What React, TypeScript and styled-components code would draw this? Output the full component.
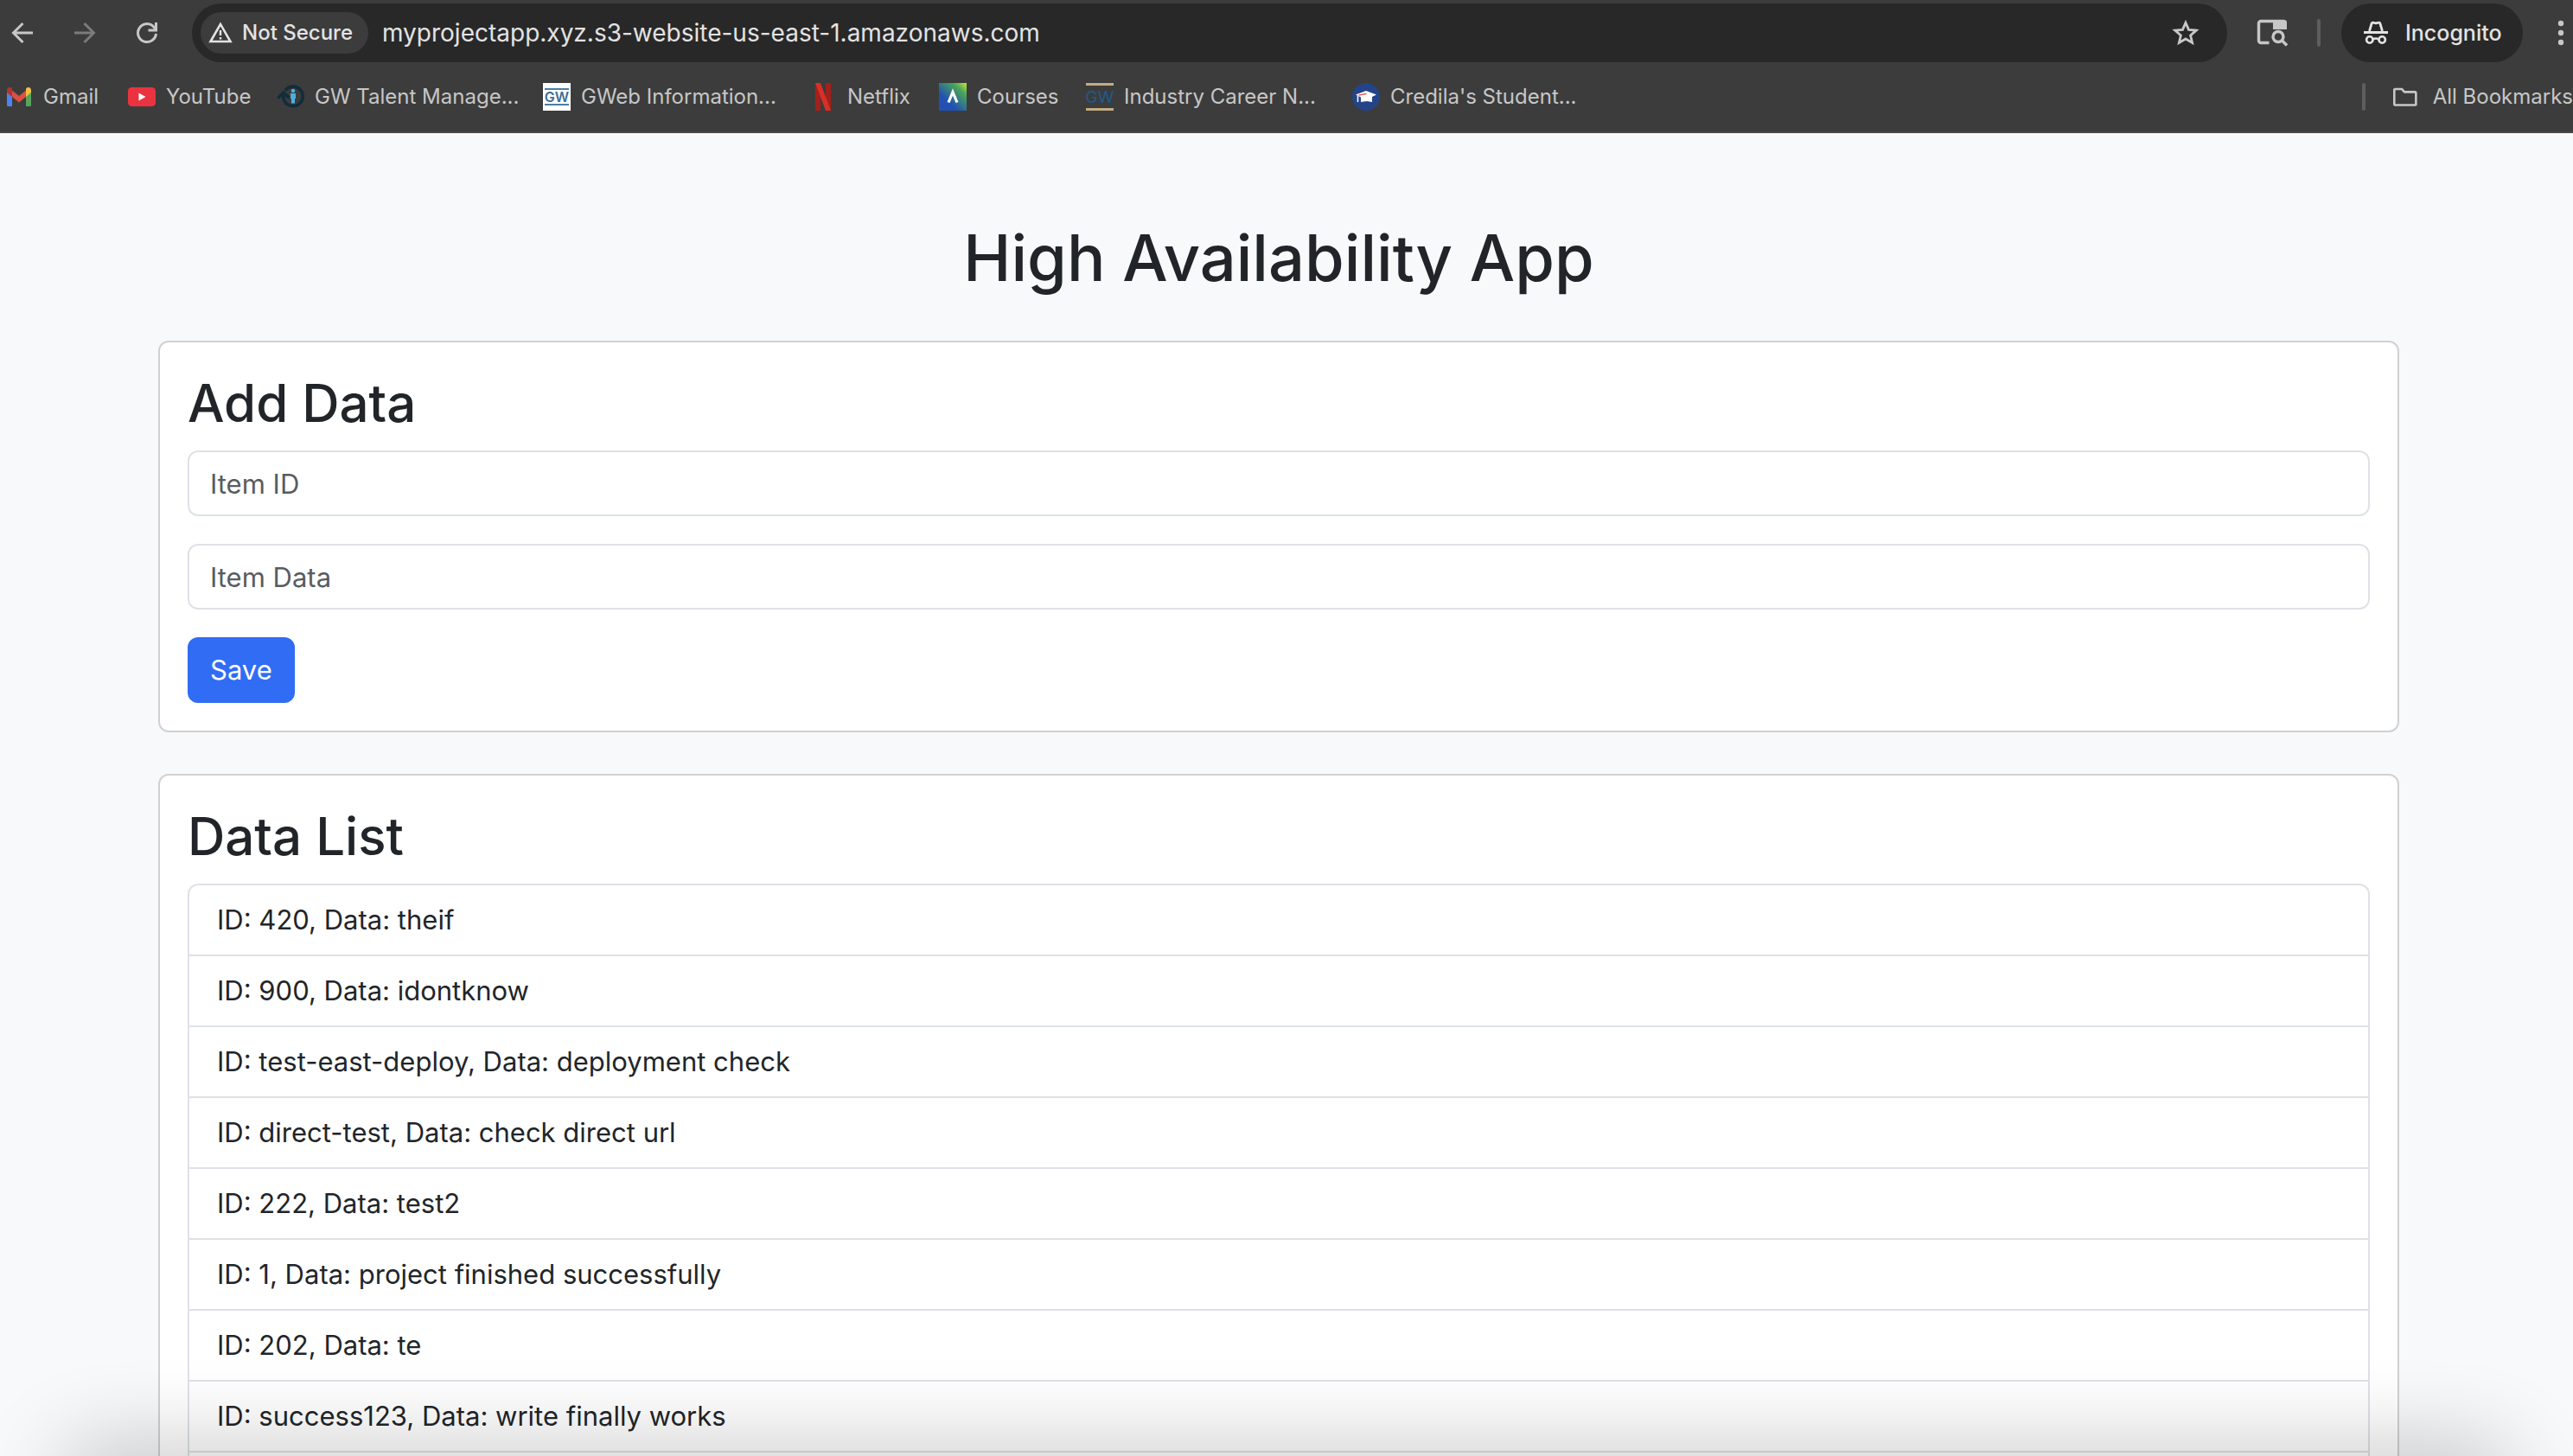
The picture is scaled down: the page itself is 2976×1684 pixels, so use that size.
import React, { useState } from "react";
import styled, { createGlobalStyle } from "styled-components";

const GlobalStyle = createGlobalStyle`
  *, *::before, *::after { box-sizing: border-box; }
  html, body { margin: 0; }
  body {
    background: #f8f9fa;
    color: #212529;
    font-family: Inter, "Liberation Sans", sans-serif;
    font-size: 31px;
    line-height: 48px;
  }
  button, input { font: inherit; }
`;

const Window = styled.div`
  height: 100vh;
  display: flex;
  flex-direction: column;
  overflow: hidden;
  position: relative;
`;

const Chrome = styled.header`
  flex: none;
  display: flex;
  flex-direction: column;
  padding: 4px 0 0;
  background: #3c3c3c;
  border-bottom: 2px solid #484848;
  color: #c7c7c7;
  overflow: hidden;
`;

const Toolbar = styled.div`
  display: flex;
  align-items: center;
  height: 68px;
`;

const NavButtons = styled.nav`
  display: flex;
  gap: 36px;
  padding: 0 34px 0 8px;
`;

const IconButton = styled.button<{ $faded?: boolean; $narrow?: boolean }>`
  display: flex;
  align-items: center;
  justify-content: center;
  flex: none;
  width: ${(p) => (p.$narrow ? 28 : 36)}px;
  height: 36px;
  padding: 0;
  border: 0;
  background: none;
  color: ${(p) => (p.$faded ? "#7b7b7b" : "#c7c7c7")};
`;

const Omnibox = styled.div`
  flex: 1;
  display: flex;
  align-items: center;
  gap: 16px;
  height: 68px;
  padding: 0 30px 0 10px;
  border-radius: 34px;
  background: #282828;
`;

const SecurityChip = styled.button`
  display: flex;
  align-items: center;
  gap: 10px;
  flex: none;
  width: 194px;
  height: 48px;
  padding: 0 8px;
  border: 0;
  border-radius: 24px;
  background: #3c3c3c;
  color: #e3e3e3;
  font-size: 24px;
  font-weight: 500;
  white-space: nowrap;
`;

const Address = styled.input`
  flex: 1;
  min-width: 0;
  padding: 0;
  border: 0;
  outline: 0;
  background: none;
  color: #e3e3e3;
  font-size: 28px;
`;

const ToolbarEnd = styled.div`
  display: flex;
  align-items: center;
  flex: none;
  padding-left: 34px;
`;

const Divider = styled.span`
  flex: none;
  width: 4px;
  height: 32px;
  border-radius: 2px;
  background: #5e5e5e;
`;

const IncognitoButton = styled.button`
  display: flex;
  align-items: center;
  gap: 18px;
  width: 210px;
  height: 68px;
  margin: 0 30px 0 24px;
  padding: 0 24px;
  border: 0;
  border-radius: 34px;
  background: #282828;
  color: #e3e3e3;
  font-size: 25px;
  font-weight: 500;
`;

const ToolbarDivider = styled(Divider)`
  margin-left: 34px;
`;

const BookmarkBar = styled.nav`
  display: flex;
  align-items: center;
  height: 80px;
  padding-left: 6px;
`;

const BookmarkList = styled.ul`
  flex: 1;
  display: flex;
  gap: 34px;
  margin: 0;
  padding: 0;
  list-style: none;
`;

const Bookmark = styled.a`
  display: flex;
  align-items: center;
  gap: 12px;
  color: #c7c7c7;
  font-size: 24px;
  line-height: 32px;
  text-decoration: none;
  white-space: nowrap;
`;

const BookmarkLabel = styled.span<{ $width: number }>`
  width: ${(p) => p.$width}px;
`;

const AllBookmarks = styled.button`
  display: flex;
  align-items: center;
  gap: 18px;
  flex: none;
  width: 208px;
  margin-left: 32px;
  padding: 0;
  border: 0;
  background: none;
  color: #c7c7c7;
  font-size: 24px;
  line-height: 32px;
  white-space: nowrap;
`;

const Page = styled.main`
  flex: 1;
  min-height: 0;
  overflow: hidden;
  padding: 96px 42px 0 24px;
`;

const Container = styled.div`
  max-width: 2592px;
  margin: 0 auto;
`;

const Title = styled.h1`
  margin: 0 0 48px;
  font-size: 74px;
  line-height: 96px;
  font-weight: 500;
  text-align: center;
`;

const Card = styled.section`
  margin-bottom: 48px;
  padding: 32px;
  border: 2px solid #d0d1d3;
  border-radius: 12px;
  background: #fff;
`;

const CardTitle = styled.h2`
  margin: 0 0 16px;
  font-size: 60px;
  line-height: 77px;
  font-weight: 500;
`;

const Form = styled.form`
  display: flex;
  flex-direction: column;
  align-items: flex-start;
  gap: 32px;
`;

const Field = styled.input`
  width: 100%;
  height: 76px;
  padding: 12px 24px;
  border: 2px solid #dee2e6;
  border-radius: 12px;
  background: #fff;
  color: #212529;
  &::placeholder { color: #595c5f; opacity: 1; }
`;

const SaveButton = styled.button`
  height: 76px;
  padding: 12px 24px;
  border: 2px solid #316cf4;
  border-radius: 12px;
  background: #316cf4;
  color: #fff;
`;

const List = styled.ul`
  margin: 0;
  padding: 0 0 82px;
  list-style: none;
  border: 2px solid #dee2e6;
  border-radius: 12px;
`;

const ListItem = styled.li`
  padding: 16px 32px;
  border-bottom: 2px solid #dee2e6;
`;

const BottomShade = styled.div`
  position: absolute;
  left: 80px;
  right: 80px;
  bottom: -60px;
  height: 60px;
  border-radius: 30px;
  box-shadow: 0 0 100px 10px rgba(0, 0, 0, 0.24);
  pointer-events: none;
`;

const BackIcon = () => (
  <svg width="36" height="36" viewBox="0 0 36 36" fill="none" stroke="currentColor" strokeWidth="3">
    <path d="M30 18H8M18.5 7L7.5 18l11 11" />
  </svg>
);

const ForwardIcon = () => (
  <svg width="36" height="36" viewBox="0 0 36 36" fill="none" stroke="currentColor" strokeWidth="3">
    <path d="M6 18h22M17.500 7l11 11-11 11" />
  </svg>
);

const ReloadIcon = () => (
  <svg width="36" height="36" viewBox="0 0 36 36" fill="none" stroke="currentColor" strokeWidth="3">
    <path d="M28.500 19a10.500 10.500 0 1 1-3.500-8.800l2.500 2.800M28.500 6v9h-9" />
  </svg>
);

const WarningIcon = () => (
  <svg width="30" height="26" viewBox="0 0 30 26" fill="none" stroke="currentColor">
    <path d="M15 3L3.500 23h23z" strokeWidth="2.600" />
    <path d="M15 10v6M15 18v2.500" strokeWidth="2.400" />
  </svg>
);

const StarIcon = () => (
  <svg width="36" height="36" viewBox="0 0 36 36" fill="none" stroke="currentColor" strokeWidth="2.800">
    <path d="M18 6.200l3.500 8.200 8.700.7-6.600 5.800 2 8.600L18 25l-7.600 4.500 2-8.600-6.600-5.800 8.700-.7z" />
  </svg>
);

const SearchTabIcon = () => (
  <svg width="36" height="32" viewBox="0 0 36 32" fill="none" stroke="currentColor">
    <path d="M14.500 27.500H5a2.500 2.500 0 0 1-2.500-2.500V5A2.500 2.500 0 0 1 5 2.500h27" strokeWidth="3.400" />
    <path d="M19 1h13a3 3 0 0 1 3 3v8H19z" fill="currentColor" stroke="none" />
    <circle cx="25" cy="20.500" r="6" fill="#3c3c3c" strokeWidth="3.400" />
    <path d="M29 24.500l6 6" strokeWidth="3.400" />
  </svg>
);

const IncognitoIcon = () => (
  <svg width="32" height="30" viewBox="0 0 32 30" fill="none" stroke="currentColor">
    <path d="M8.500 13L11 4.500q.6-2 2.500-1.200 2.500 1 5 0 1.900-.8 2.500 1.200L23.500 13" strokeWidth="2.800" />
    <path d="M2 14.500h28" strokeWidth="3" />
    <circle cx="8.800" cy="23" r="3.700" strokeWidth="2.600" />
    <circle cx="23.200" cy="23" r="3.700" strokeWidth="2.600" />
    <path d="M12.500 22.500q3.500-2 7 0" strokeWidth="2.600" />
  </svg>
);

const DotsIcon = () => (
  <svg width="28" height="36" viewBox="0 0 28 36" fill="currentColor">
    <circle cx="14" cy="7" r="3.200" />
    <circle cx="14" cy="18" r="3.200" />
    <circle cx="14" cy="29" r="3.200" />
  </svg>
);

const FolderIcon = () => (
  <svg width="32" height="26" viewBox="0 0 32 26" fill="none" stroke="currentColor" strokeWidth="3" strokeLinejoin="round">
    <path d="M2.500 2.500h9l3.500 4h14a1.500 1.500 0 0 1 1.500 1.500v15a1 1 0 0 1-1 1h-27a1 1 0 0 1-1-1V3.500a1 1 0 0 1 1-1z" />
  </svg>
);

const GmailLogo = () => (
  <svg width="32" height="32" viewBox="0 0 32 32">
    <path d="M2 10v15.500A1.500 1.500 0 0 0 3.500 27H8V14z" fill="#4f83ee" />
    <path d="M24 14v13h4.500a1.500 1.500 0 0 0 1.500-1.500V10z" fill="#55a55b" />
    <path d="M8 8.500l8 6.500 8-6.500V16l-8 6.500L8 16z" fill="#dc5044" />
    <path d="M2 8.500C2 5 5.500 4 8 6.500V16l-6-5z" fill="#b3352b" />
    <path d="M30 8.500c0-3.500-3.500-4.500-6-2V16l6-5z" fill="#f3bf42" />
  </svg>
);

const YouTubeLogo = () => (
  <svg width="32" height="32" viewBox="0 0 32 32">
    <rect y="5" width="32" height="22" rx="4.500" fill="#ea3340" />
    <path d="M12.500 11.500l8 4.500-8 4.500z" fill="#fff" />
  </svg>
);

const TalentLogo = () => (
  <svg width="32" height="32" viewBox="0 0 32 32" fill="none" stroke="#122c3a">
    <path d="M10 8.500a11.300 11.300 0 1 1-2.300 8" strokeWidth="3.600" />
    <path d="M1.500 17.500L8 11l6.500 6.500M8 11v6" strokeWidth="3.600" />
    <circle cx="19" cy="9" r="2.300" fill="#4bb1dc" stroke="none" />
    <path d="M16 12h6v6h-1v5.500h-4V18h-1z" fill="#4bb1dc" stroke="none" />
  </svg>
);

const GwebLogo = () => (
  <svg width="32" height="32" viewBox="0 0 32 32">
    <rect width="32" height="32" fill="#fff" />
    <path d="M2 7h28M2 25h28" stroke="#4a7ea6" strokeWidth="2" />
    <text x="16" y="21.500" fontSize="16" fontWeight="600" textAnchor="middle" fill="#3c6e98" fontFamily="Inter, sans-serif">GW</text>
  </svg>
);

const NetflixLogo = () => (
  <svg width="32" height="32" viewBox="0 0 32 32">
    <path d="M7 0h6v32H7zM19 0h6v32h-6z" fill="#a3201b" />
    <path d="M7 0h6l12 32h-6z" fill="#d63027" />
  </svg>
);

const CoursesLogo = () => (
  <svg width="32" height="32" viewBox="0 0 32 32">
    <defs>
      <linearGradient id="courses" x1="1" y1="0" x2="0.350" y2="0.700">
        <stop offset="0" stopColor="#c8e83c" />
        <stop offset="0.350" stopColor="#4aa658" />
        <stop offset="1" stopColor="#2250b4" />
      </linearGradient>
    </defs>
    <rect width="32" height="32" fill="url(#courses)" />
    <path d="M11 22.500l5-12 5 12" fill="none" stroke="#fff" strokeWidth="3.200" />
  </svg>
);

const IndustryLogo = () => (
  <svg width="32" height="32" viewBox="0 0 32 32">
    <path d="M0 1.500h32M0 30.500h32" stroke="#c4ac82" strokeWidth="3" />
    <text x="16" y="23" fontSize="19" textAnchor="middle" fill="#1f5a8c" fontFamily="Inter, sans-serif">GW</text>
  </svg>
);

const CredilaLogo = () => (
  <svg width="32" height="32" viewBox="0 0 32 32">
    <circle cx="16" cy="16" r="16" fill="#24448a" />
    <path d="M4 13.500L16 9l12 4.500-5 2.500v6l-6-1-7 1v-5.500z" fill="#fff" />
    <path d="M6.500 14.500V22" stroke="#fff" strokeWidth="1.500" />
    <path d="M16.500 12.500l-9 1.500" stroke="#e0625c" strokeWidth="1.500" />
  </svg>
);

const bookmarks = [
  { label: "Gmail", width: 64, Logo: GmailLogo },
  { label: "YouTube", width: 94, Logo: YouTubeLogo },
  { label: "GW Talent Manage...", width: 230, Logo: TalentLogo },
  { label: "GWeb Information...", width: 230, Logo: GwebLogo },
  { label: "Netflix", width: 72, Logo: NetflixLogo },
  { label: "Courses", width: 92, Logo: CoursesLogo },
  { label: "Industry Career N...", width: 230, Logo: IndustryLogo },
  { label: "Credila's Student...", width: 230, Logo: CredilaLogo },
];

const items = [
  { id: "420", data: "theif" },
  { id: "900", data: "idontknow" },
  { id: "test-east-deploy", data: "deployment check" },
  { id: "direct-test", data: "check direct url" },
  { id: "222", data: "test2" },
  { id: "1", data: "project finished successfully" },
  { id: "202", data: "te" },
  { id: "success123", data: "write finally works" },
];

export default function App() {
  const [url, setUrl] = useState("myprojectapp.xyz.s3-website-us-east-1.amazonaws.com");

  return (
    <Window>
      <GlobalStyle />
      <Chrome>
        <Toolbar>
          <NavButtons>
            <IconButton aria-label="Back"><BackIcon /></IconButton>
            <IconButton aria-label="Forward" $faded><ForwardIcon /></IconButton>
            <IconButton aria-label="Reload"><ReloadIcon /></IconButton>
          </NavButtons>
          <Omnibox>
            <SecurityChip><WarningIcon />Not Secure</SecurityChip>
            <Address aria-label="Address" value={url} onChange={(e) => setUrl(e.target.value)} />
            <IconButton aria-label="Bookmark this tab"><StarIcon /></IconButton>
          </Omnibox>
          <ToolbarEnd>
            <IconButton aria-label="Search tabs"><SearchTabIcon /></IconButton>
            <ToolbarDivider />
            <IncognitoButton><IncognitoIcon />Incognito</IncognitoButton>
            <IconButton aria-label="Menu" $narrow><DotsIcon /></IconButton>
          </ToolbarEnd>
        </Toolbar>
        <BookmarkBar aria-label="Bookmarks">
          <BookmarkList>
            {bookmarks.map(({ label, width, Logo }) => (
              <li key={label}>
                <Bookmark href="#">
                  <Logo />
                  <BookmarkLabel $width={width}>{label}</BookmarkLabel>
                </Bookmark>
              </li>
            ))}
          </BookmarkList>
          <Divider />
          <AllBookmarks><FolderIcon />All Bookmarks</AllBookmarks>
        </BookmarkBar>
      </Chrome>
      <Page>
        <Container>
          <Title>High Availability App</Title>
          <Card>
            <CardTitle>Add Data</CardTitle>
            <Form onSubmit={(e) => e.preventDefault()}>
              <Field aria-label="Item ID" placeholder="Item ID" />
              <Field aria-label="Item Data" placeholder="Item Data" />
              <SaveButton type="submit">Save</SaveButton>
            </Form>
          </Card>
          <Card>
            <CardTitle>Data List</CardTitle>
            <List>
              {items.map((item) => (
                <ListItem key={item.id}>ID: {item.id}, Data: {item.data}</ListItem>
              ))}
            </List>
          </Card>
        </Container>
      </Page>
      <BottomShade />
    </Window>
  );
}
